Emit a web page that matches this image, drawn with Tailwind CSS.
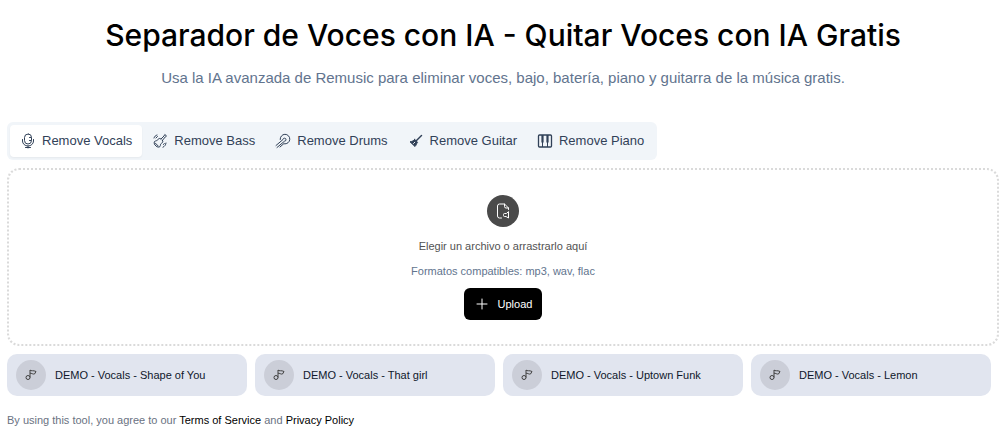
<!DOCTYPE html>
<html lang="es">
<head>
    <meta charset="UTF-8">
    <meta name="viewport" content="width=device-width, initial-scale=1.0">
    <title>Separador de Voces con IA</title>
    <script src="https://cdn.jsdelivr.net/npm/@tailwindcss/browser@4"></script>
</head>
<body class="bg-white font-['Liberation_Sans',Arial,sans-serif]">
    <main class="pt-[15px] pl-[7px] pr-px">
        <header class="text-center">
            <h1 class="font-['Inter',sans-serif] text-[30px] leading-10 font-medium text-black">Separador de Voces con IA - Quitar Voces con IA Gratis</h1>
            <p class="mt-[9px] text-[15px] leading-7 text-slate-500">Usa la IA avanzada de Remusic para eliminar voces, bajo, batería, piano y guitarra de la música gratis.</p>
        </header>

        <!-- Instrument tabs -->
        <div role="tablist" class="mt-[30px] inline-flex rounded-md bg-slate-100 p-[3px] text-[13px] leading-5 text-slate-700">
            <button role="tab" aria-selected="true" class="flex items-center gap-[6px] rounded bg-white px-[10px] py-[6px] shadow-xs">
                <svg class="size-4" viewBox="0 0 16 16" fill="none" stroke="currentColor" stroke-linecap="round" stroke-linejoin="round">
                    <rect x="4.500" y="1" width="7" height="10" rx="3.500"/>
                    <path d="M2.500 6.500v1.500a5.500 5 0 0 0 11 0V6.500M8 13v2M5.500 14.500h5M9.500 4.500H11M9.500 7.500H11"/>
                </svg>
                Remove Vocals
            </button>
            <button role="tab" aria-selected="false" class="flex items-center gap-[6px] px-[10px] py-[6px]">
                <svg class="size-4" viewBox="0 0 16 16" fill="none" stroke="currentColor" stroke-linecap="round" stroke-linejoin="round">
                    <path d="M9 6l3-3 .8-1.500 1.700 1.500-1.300 1L10.500 7.300M9 6C7.800 5 6.500 5.300 6 6.500 5.500 7.800 4 7.500 2.500 8.500c-.8 1.700 0 3.300 1.500 4.500 1.300 1.200 3 1.500 4 .5.800-1.200 0-2.500 1.500-3.200C10.800 9.500 11.300 8.500 10.500 7.300M3.200 10l3 3"/>
                    <path d="M2 5C2.500 3.500 3.500 2.500 5 2M4 5l1.500-1.500M14 10c-.3 2-1.200 3.300-3 4.200M11.500 11.500l.8-1"/>
                </svg>
                Remove Bass
            </button>
            <button role="tab" aria-selected="false" class="flex items-center gap-[6px] px-[10px] py-[6px]">
                <svg class="size-4" viewBox="0 0 16 16" fill="none" stroke="currentColor" stroke-linecap="round" stroke-linejoin="round">
                    <path d="M5.200 6.500A4.800 4.800 0 1 1 9.500 10.900"/>
                    <path d="M1 12.500l7-6a1.500 1.500 0 1 1 1.500 1.700L2 14.500M5 14l4-3.500"/>
                </svg>
                Remove Drums
            </button>
            <button role="tab" aria-selected="false" class="flex items-center gap-[6px] px-[10px] py-[6px]">
                <svg class="size-4" viewBox="0 0 16 16" fill="none" stroke="currentColor" stroke-linecap="round" stroke-linejoin="round">
                    <path d="M8 8l5.500-5.500" stroke-width="1.500"/>
                    <path d="M6.800 6.500L9.500 9.300C8.500 10.500 8.500 12 7 13.500L2 8.800C4 8.500 5.500 7.800 6.800 6.500z" fill="currentColor"/>
                    <path class="stroke-slate-100" d="M5.500 10.500l1.300-1.300"/>
                </svg>
                Remove Guitar
            </button>
            <button role="tab" aria-selected="false" class="flex items-center gap-[6px] px-[10px] py-[6px]">
                <svg class="size-4" viewBox="0 0 16 16" fill="none" stroke="currentColor">
                    <rect x="1.500" y="2" width="13" height="12" rx="1" stroke-width="1.300"/>
                    <path d="M5.500 9v5M10.500 9v5"/>
                    <path d="M5.500 2v7.500M10.500 2v7.500" stroke-width="2.200"/>
                </svg>
                Remove Piano
            </button>
        </div>

        <!-- Drop zone -->
        <section class="mt-2 flex flex-col items-center rounded-xl border-2 border-dotted border-[#dadada] pt-[25px] pb-6 text-[11px] leading-4">
            <div class="flex size-8 items-center justify-center rounded-full bg-[#4a4a4a] text-white">
                <svg class="size-4" viewBox="0 0 16 16" fill="none" stroke="currentColor" stroke-linecap="round" stroke-linejoin="round">
                    <path d="M6.500 15H4.500a2 2 0 0 1-2-2V3a2 2 0 0 1 2-2H9.500l4 4v1.500M9.500 1v2.500A1.500 1.500 0 0 0 11 5h2.500"/>
                    <path d="M13.500 9v6L11 13.500H9.500a1 1 0 0 1-1-1v-1a1 1 0 0 1 1-1H11z"/>
                </svg>
            </div>
            <p class="mt-[11px] text-neutral-600">Elegir un archivo o arrastrarlo aquí</p>
            <p class="mt-[9px] text-slate-500">Formatos compatibles: mp3, wav, flac</p>
            <button class="mt-[9px] flex h-8 items-center gap-2 rounded-md bg-black px-[10px] text-white">
                <svg class="size-4" viewBox="0 0 16 16" fill="none" stroke="currentColor" stroke-linecap="round">
                    <path d="M8 3v10M3 8h10"/>
                </svg>
                Upload
            </button>
        </section>

        <!-- Demo tracks -->
        <div class="mt-2 grid grid-cols-4 text-[11px] leading-4 text-slate-900">
            <div class="pr-2">
                <button class="flex h-[42px] w-full items-center gap-[9px] rounded-[10px] bg-[#e1e5ef] px-[9px]">
                    <span class="flex size-[30px] items-center justify-center rounded-full bg-[#cbced8] text-neutral-700">
                        <svg class="size-3" viewBox="0 0 12 12" fill="none" stroke="currentColor" stroke-linejoin="round"><circle cx="3" cy="8.500" r="2"/><path d="M5 8.500V1c1 1.500 3.500 0 6 1.500L9.500 5C8 5.500 6.500 4 5 4.200"/></svg>
                    </span>
                    DEMO - Vocals - Shape of You
                </button>
            </div>
            <div class="pr-2">
                <button class="flex h-[42px] w-full items-center gap-[9px] rounded-[10px] bg-[#e1e5ef] px-[9px]">
                    <span class="flex size-[30px] items-center justify-center rounded-full bg-[#cbced8] text-neutral-700">
                        <svg class="size-3" viewBox="0 0 12 12" fill="none" stroke="currentColor" stroke-linejoin="round"><circle cx="3" cy="8.500" r="2"/><path d="M5 8.500V1c1 1.500 3.500 0 6 1.500L9.500 5C8 5.500 6.500 4 5 4.200"/></svg>
                    </span>
                    DEMO - Vocals - That girl
                </button>
            </div>
            <div class="pr-2">
                <button class="flex h-[42px] w-full items-center gap-[9px] rounded-[10px] bg-[#e1e5ef] px-[9px]">
                    <span class="flex size-[30px] items-center justify-center rounded-full bg-[#cbced8] text-neutral-700">
                        <svg class="size-3" viewBox="0 0 12 12" fill="none" stroke="currentColor" stroke-linejoin="round"><circle cx="3" cy="8.500" r="2"/><path d="M5 8.500V1c1 1.500 3.500 0 6 1.500L9.500 5C8 5.500 6.500 4 5 4.200"/></svg>
                    </span>
                    DEMO - Vocals - Uptown Funk
                </button>
            </div>
            <div class="pr-2">
                <button class="flex h-[42px] w-full items-center gap-[9px] rounded-[10px] bg-[#e1e5ef] px-[9px]">
                    <span class="flex size-[30px] items-center justify-center rounded-full bg-[#cbced8] text-neutral-700">
                        <svg class="size-3" viewBox="0 0 12 12" fill="none" stroke="currentColor" stroke-linejoin="round"><circle cx="3" cy="8.500" r="2"/><path d="M5 8.500V1c1 1.500 3.500 0 6 1.500L9.500 5C8 5.500 6.500 4 5 4.200"/></svg>
                    </span>
                    DEMO - Vocals - Lemon
                </button>
            </div>
        </div>

        <p class="mt-4 text-[11px] leading-4 text-gray-500">By using this tool, you agree to our <a href="#" class="text-black">Terms of Service</a> and <a href="#" class="text-black">Privacy Policy</a></p>
    </main>
</body>
</html>
